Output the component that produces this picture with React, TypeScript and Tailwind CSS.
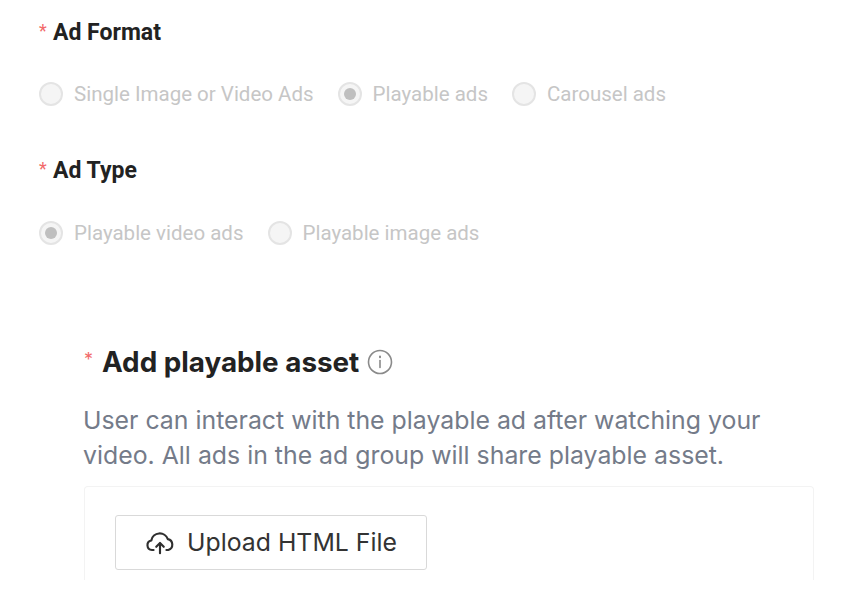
function Radio({ label, checked }: { label: string; checked?: boolean }) {
  return (
    <div className="flex items-center gap-[11px]">
      <span className="flex h-[24px] w-[24px] items-center justify-center rounded-full border-2 border-[#e4e4e4] bg-[#f5f5f5]">
        {checked && <span className="h-[12px] w-[12px] rounded-full bg-[#bfbfbf]" />}
      </span>
      <span className="text-[20.5px] leading-[30px] text-[#c6c6c6]">{label}</span>
    </div>
  );
}

function Label({ text }: { text: string }) {
  return (
    <div className="flex h-[30px] items-center">
      <span className="mb-[5px] w-[14px] text-[18px] leading-none text-[#f26a6a]">*</span>
      <span className="text-[23px] leading-[30px] font-bold text-[#222222]">{text}</span>
    </div>
  );
}

export default function App() {
  return (
    <div className="h-[590px] w-[846px] overflow-hidden bg-white font-['Roboto',sans-serif]">
      <div className="pt-[18px] pl-[39px]">
        <Label text="Ad Format" />
        <div className="mt-[31px] flex gap-[24px]">
          <Radio label="Single Image or Video Ads" />
          <Radio label="Playable ads" checked />
          <Radio label="Carousel ads" />
        </div>
        <div className="mt-[47px]">
          <Label text="Ad Type" />
        </div>
        <div className="mt-[32px] flex gap-[24px]">
          <Radio label="Playable video ads" checked />
          <Radio label="Playable image ads" />
        </div>
      </div>
      <div className="mt-[96px] ml-[84px] w-[730px] font-['Inter',sans-serif]">
        <div className="flex h-[36px] items-center">
          <span className="mb-[5px] w-[18px] text-[18px] leading-none text-[#f26a6a]">*</span>
          <span className="text-[27.8px] leading-[36px] font-bold text-[#222222]">Add playable asset</span>
          <svg className="ml-[8px] text-[#8a8a8a]" width="26" height="26" viewBox="0 0 26 26" fill="none" stroke="currentColor" strokeWidth="1.6" strokeLinecap="round">
            <circle cx="13" cy="13" r="11.5" />
            <path d="M13 11.5v7" />
            <path d="M13 7.6v.6" strokeWidth="2" />
          </svg>
        </div>
        <p className="mt-[23px] -ml-[1px] text-[24.85px] leading-[35px] text-[#747b89]">
          User can interact with the playable ad after watching your
          <br />
          video. All ads in the ad group will share playable asset.
        </p>
        <div className="mt-[13px] h-[94px] rounded-t-[4px] border border-b-0 border-[#f3f3f3] pt-[28px] pl-[30px]">
          <button className="flex h-[55px] w-[312px] items-center justify-center gap-[12px] rounded-[3px] border border-[#d9d9d9] bg-white text-[24.8px] text-[#333333]">
            <svg width="30" height="26" viewBox="0 0 28 24" fill="none" stroke="#2f2f2f" strokeWidth="2" strokeLinecap="round" strokeLinejoin="round">
              <path d="M8 18.5H6.5a4.5 4.5 0 0 1-.6-8.9A8 8 0 0 1 21.3 8.4a5.2 5.2 0 0 1 .4 10.1H20" />
              <path d="M14 21.5v-9" />
              <path d="M10.5 15.5L14 12l3.5 3.5" />
            </svg>
            <span>Upload HTML File</span>
          </button>
        </div>
      </div>
    </div>
  );
}
